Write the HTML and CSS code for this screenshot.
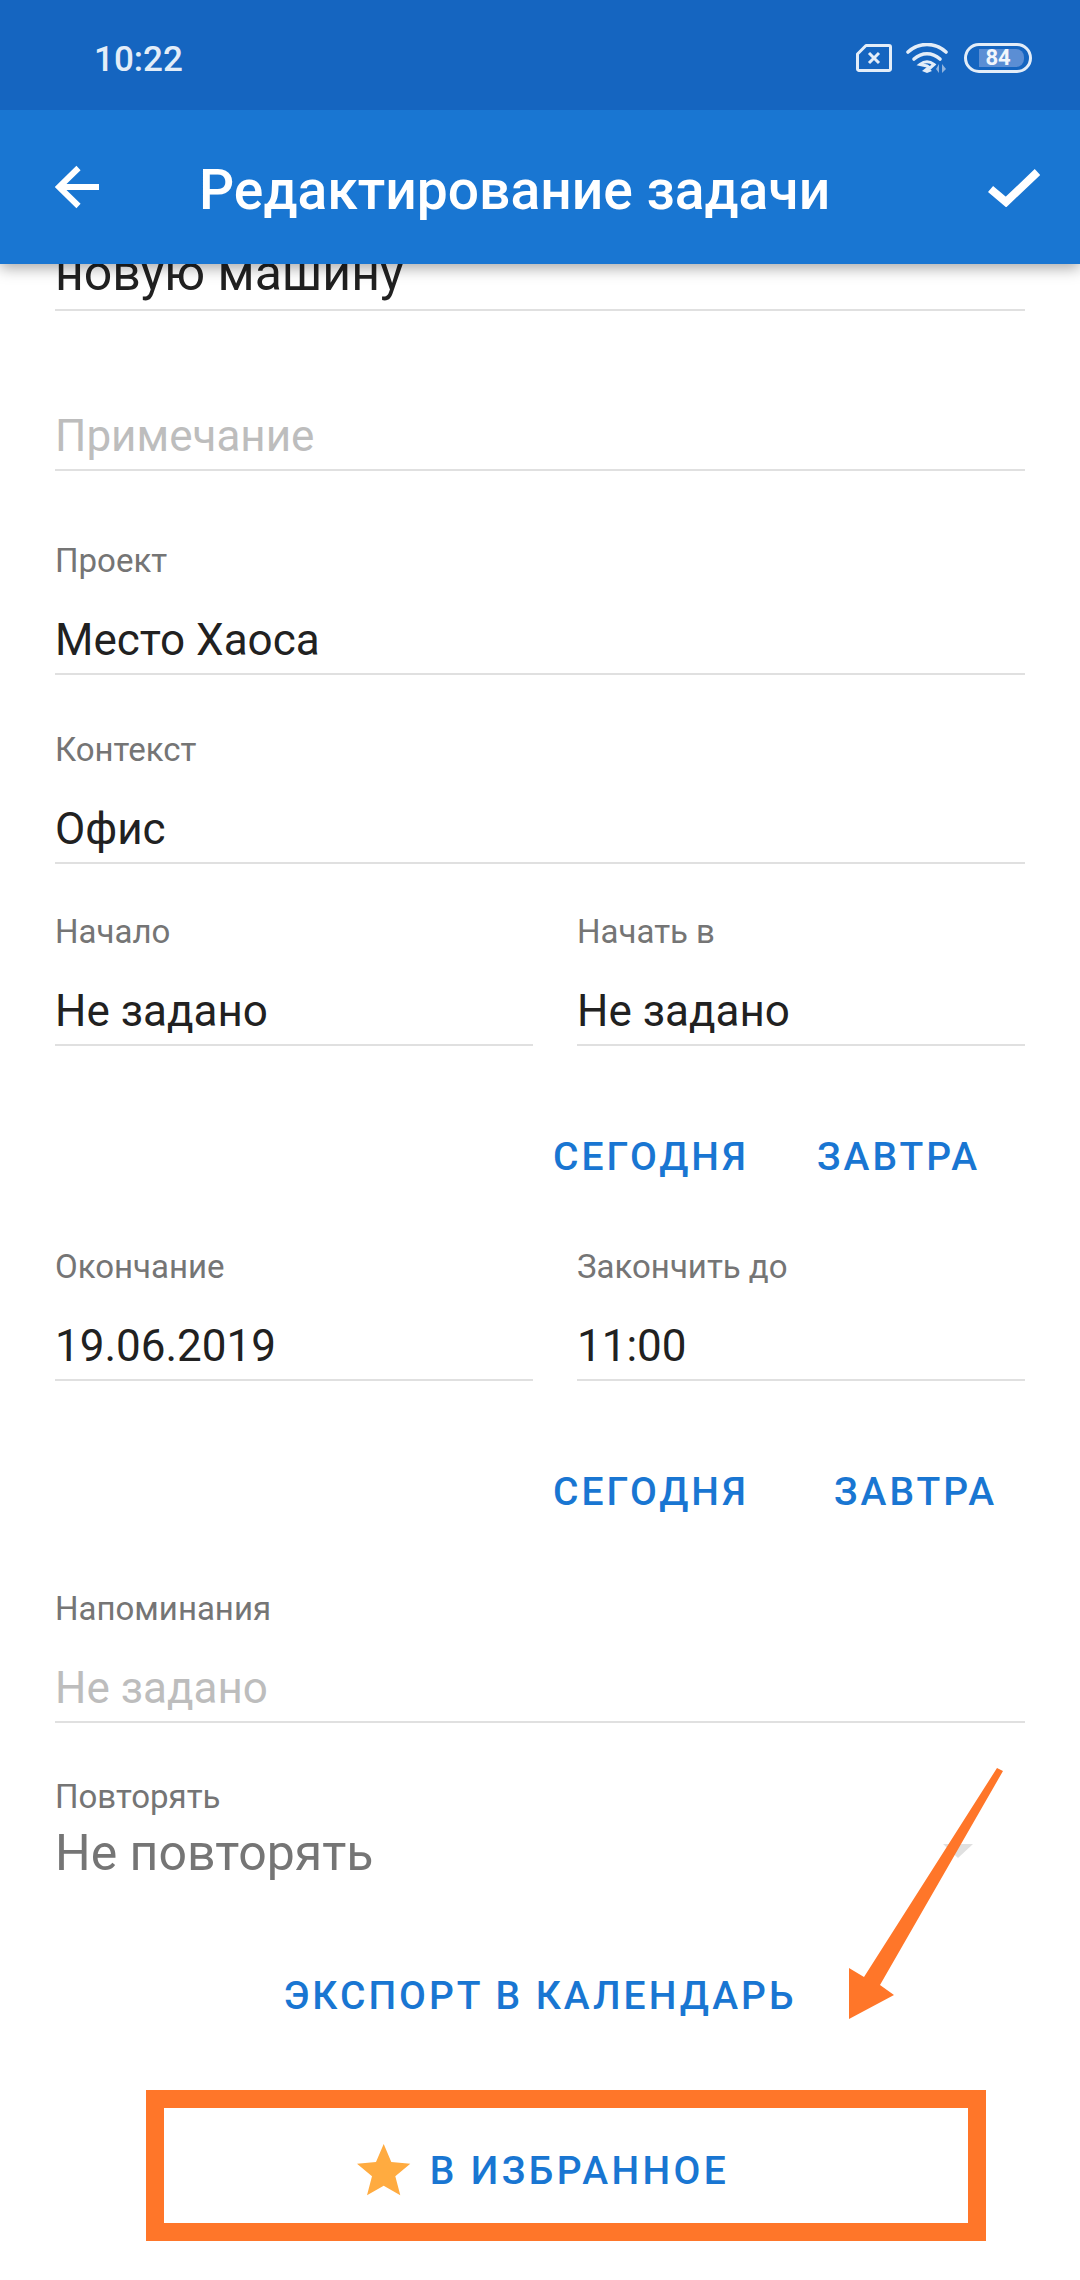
FILE: index.html
```html
<!DOCTYPE html>
<html lang="ru">
<head>
<meta charset="utf-8">
<title>Редактирование задачи</title>
<link rel="stylesheet" href="styles.css">
</head>
<body>
<div class="screen">
  <header class="appbar">
    <div class="statusbar">
      <span class="time">10:22</span>
      <div class="status-icons">
        <svg class="ic-sim" viewBox="0 0 36 28"><path d="M10 1.5H33a1.5 1.5 0 0 1 1.5 1.5V25a1.5 1.5 0 0 1-1.5 1.5H3A1.5 1.5 0 0 1 1.5 25V10Z" fill="none" stroke="#e3edf8" stroke-width="3" stroke-linejoin="round"/><path d="M13 9l10 10M23 9L13 19" stroke="#e3edf8" stroke-width="3" fill="none"/></svg>
        <svg class="ic-wifi" viewBox="0 0 44 30"><g fill="none" stroke="#e3edf8" stroke-width="3.6" stroke-linecap="round"><path d="M2 9C13-1 29-1 40 9"/><path d="M8 16C16 9 26 9 34 16"/></g><path d="M14 21.5C18.500 18 23.500 18 28 21.500L24 25 21 23Z" fill="none" stroke="#e3edf8" stroke-width="3"/><path d="M21 24l5 4-5 2-5-2Z" fill="#e3edf8"/><path d="M33 21v9l-3-4ZM36 21v9l4-4Z" fill="#8fb3de"/></svg>
        <div class="battery"><span class="battery-fill"></span><span class="battery-num">84</span></div>
      </div>
    </div>
    <div class="toolbar">
      <svg class="ic-back" viewBox="0 0 44 44"><path d="M44 22H6M23.500 3L4 22l19.500 19" fill="none" stroke="#fff" stroke-width="6"/></svg>
      <h1 class="title">Редактирование задачи</h1>
      <svg class="ic-check" viewBox="0 0 52 38"><path d="M2.500 20L18 33 49.500 3" fill="none" stroke="#fff" stroke-width="8"/></svg>
    </div>
  </header>
  <main class="form">
    <div class="clip-row"><div class="value value-clipped">новую машину</div></div>
    <div class="value value-empty gap-note">Примечание</div>
    <div class="field gap-project">
      <label class="label">Проект</label>
      <div class="value">Место Хаоса</div>
    </div>
    <div class="field gap-context">
      <label class="label">Контекст</label>
      <div class="value">Офис</div>
    </div>
    <div class="pair gap-start">
      <div class="field"><label class="label">Начало</label><div class="value">Не задано</div></div>
      <div class="field"><label class="label">Начать в</label><div class="value">Не задано</div></div>
    </div>
    <div class="actions actions-start">
      <span class="btn">СЕГОДНЯ</span>
      <span class="btn">ЗАВТРА</span>
    </div>
    <div class="pair gap-due">
      <div class="field"><label class="label">Окончание</label><div class="value">19.06.2019</div></div>
      <div class="field"><label class="label">Закончить до</label><div class="value">11:00</div></div>
    </div>
    <div class="actions actions-due">
      <span class="btn">СЕГОДНЯ</span>
      <span class="btn">ЗАВТРА</span>
    </div>
    <div class="field gap-remind">
      <label class="label">Напоминания</label>
      <div class="value value-empty">Не задано</div>
    </div>
    <div class="field gap-repeat">
      <label class="label">Повторять</label>
      <div class="spinner">Не повторять<span class="caret"></span></div>
    </div>
    <div class="center-btn gap-export"><span class="btn">ЭКСПОРТ В КАЛЕНДАРЬ</span></div>
    <div class="center-btn gap-fav">
      <svg class="ic-star" viewBox="0 0 54 52"><path d="M26.700 0L34.300 18 53.300 19.700 38.300 32.300 43.300 51.300 26.700 41.700 10 51.300 15 32.300 0 19.700 19 18Z" fill="#ffab40"/></svg>
      <span class="btn btn-fav">В ИЗБРАННОЕ</span>
    </div>
  </main>
  <div class="mark-box"></div>
  <svg class="mark-arrow" viewBox="0 0 1080 2280"><polygon points="997,1768 1003,1771 880,1985 894,1995 849,2019 849,1968 864,1977" fill="#ff7629"/></svg>
</div>
</body>
</html>
```
FILE: styles.css
```css
* { box-sizing: border-box; }
html, body { margin: 0; padding: 0; background: #fff; }
.screen {
  position: relative;
  width: 1080px;
  height: 2280px;
  overflow: hidden;
  font-family: Roboto, "Noto Sans", sans-serif;
  background: #fff;
}
.appbar {
  position: relative;
  z-index: 2;
  box-shadow: 0 4px 14px rgba(0, 0, 0, 0.35);
}
.statusbar {
  height: 110px;
  background: #1565c0;
  display: flex;
  align-items: center;
  justify-content: space-between;
  padding: 0 48px 0 94px;
}
.time { color: #e3edf8; font-size: 35px; font-weight: 500; margin-top: 8px; }
.status-icons { display: flex; align-items: center; margin-top: 6px; }
.ic-sim { width: 36px; height: 28px; display: block; }
.ic-wifi { width: 44px; height: 30px; display: block; margin-left: 14px; }
.battery {
  position: relative;
  width: 68px;
  height: 30px;
  margin-left: 14px;
  border: 3px solid #e3edf8;
  border-radius: 15px;
  display: flex;
  align-items: center;
  justify-content: center;
}
.battery-fill {
  position: absolute;
  left: 12px;
  top: 3px;
  width: 45px;
  height: 18px;
  background: #5b8ed4;
  border-radius: 0 8px 8px 0;
}
.battery-num { position: relative; color: #f2f6fc; font-size: 22px; font-weight: 700; line-height: 1; }
.toolbar {
  height: 154px;
  background: #1976d2;
  display: flex;
  align-items: center;
  padding: 0 40px 0 55px;
}
.ic-back { width: 44px; height: 44px; display: block; }
.title {
  margin: 6px 0 0 100px;
  flex: 1;
  color: #fff;
  font-size: 55.200px;
  font-weight: 500;
  line-height: 66px;
}
.ic-check { width: 52px; height: 38px; display: block; margin-top: 2px; }
.form { padding: 0 55px; }
.clip-row { height: 47px; overflow: hidden; border-bottom: 2px solid #e0e0e0; }
.field { display: flex; flex-direction: column; }
.label {
  display: block;
  height: 40px;
  line-height: 40px;
  margin-bottom: 26px;
  font-size: 33px;
  color: #757575;
}
.value {
  height: 68px;
  line-height: 66px;
  font-size: 44px;
  color: #212121;
  border-bottom: 2px solid #e0e0e0;
}
.value-clipped { margin-top: -24px; border-bottom: 0; font-size: 50px; }
.value-empty { color: #bdbdbd; }
.gap-note { margin-top: 92px; }
.gap-project { margin-top: 70px; }
.gap-context { margin-top: 55px; }
.gap-start { margin-top: 48px; }
.gap-due { margin-top: 60px; }
.gap-remind { margin-top: 67px; }
.gap-repeat { margin-top: 54px; }
.gap-export { margin-top: 80px; }
.gap-fav { margin-top: 115px; padding-left: 6px; }
.pair { display: grid; grid-template-columns: 478px 448px; column-gap: 44px; }
.actions { display: flex; height: 60px; margin-top: 81px; }
.actions-start { padding-left: 498px; gap: 68px; }
.actions-due { padding-left: 498px; gap: 85px; }
.btn {
  font-size: 39px;
  font-weight: 500;
  letter-spacing: 3px;
  line-height: 60px;
  color: #1976d2;
  white-space: nowrap;
}
.btn-fav { letter-spacing: 3.400px; }
.spinner {
  position: relative;
  height: 66px;
  margin-top: -23px;
  line-height: 66px;
  font-size: 50px;
  color: #757575;
}
.caret {
  position: absolute;
  left: 888px;
  top: 24px;
  width: 0;
  height: 0;
  border-left: 15px solid transparent;
  border-right: 15px solid transparent;
  border-top: 14px solid #e0e0e0;
}
.center-btn {
  display: flex;
  justify-content: center;
  align-items: center;
  height: 60px;
}
.ic-star { width: 54px; height: 52px; display: block; margin: -3px 19px 0 0; }
.mark-box {
  position: absolute;
  left: 146px;
  top: 2090px;
  width: 840px;
  height: 151px;
  border: 18.500px solid #ff7629;
}
.mark-arrow { position: absolute; left: 0; top: 0; width: 1080px; height: 2280px; pointer-events: none; }
```
